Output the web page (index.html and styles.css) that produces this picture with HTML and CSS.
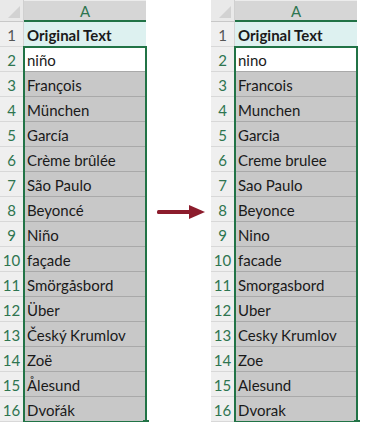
FILE: index.html
```html
<!DOCTYPE html>
<html>
<head>
<meta charset="utf-8">
<link rel="stylesheet" href="styles.css">
</head>
<body>
<div class="page">
  <div class="sheet">
    <div class="corner"><span class="tri"></span></div>
    <div class="colhead">A</div>
    <div class="rh first">1</div><div class="cell title">Original Text</div>
    <div class="rh">2</div><div class="cell active">niño</div>
    <div class="rh">3</div><div class="cell">François</div>
    <div class="rh">4</div><div class="cell">München</div>
    <div class="rh">5</div><div class="cell">García</div>
    <div class="rh">6</div><div class="cell">Crème brûlée</div>
    <div class="rh">7</div><div class="cell">São Paulo</div>
    <div class="rh">8</div><div class="cell">Beyoncé</div>
    <div class="rh">9</div><div class="cell">Niño</div>
    <div class="rh">10</div><div class="cell">façade</div>
    <div class="rh">11</div><div class="cell">Smörgåsbord</div>
    <div class="rh">12</div><div class="cell">Über</div>
    <div class="rh">13</div><div class="cell">Český Krumlov</div>
    <div class="rh">14</div><div class="cell">Zoë</div>
    <div class="rh">15</div><div class="cell">Ålesund</div>
    <div class="rh">16</div><div class="cell">Dvořák</div>
    <div class="selection"><span class="handle"></span></div>
  </div>
  <div class="arrowbox">
    <svg width="50" height="16" viewBox="0 0 50 16">
      <rect x="0" y="6" width="34" height="4" rx="1.5" fill="#8c1c2c"/>
      <path d="M32 1 L48 8 L32 15 Z" fill="#8c1c2c"/>
    </svg>
  </div>
  <div class="sheet">
    <div class="corner"><span class="tri"></span></div>
    <div class="colhead">A</div>
    <div class="rh first">1</div><div class="cell title">Original Text</div>
    <div class="rh">2</div><div class="cell active">nino</div>
    <div class="rh">3</div><div class="cell">Francois</div>
    <div class="rh">4</div><div class="cell">Munchen</div>
    <div class="rh">5</div><div class="cell">Garcia</div>
    <div class="rh">6</div><div class="cell">Creme brulee</div>
    <div class="rh">7</div><div class="cell">Sao Paulo</div>
    <div class="rh">8</div><div class="cell">Beyonce</div>
    <div class="rh">9</div><div class="cell">Nino</div>
    <div class="rh">10</div><div class="cell">facade</div>
    <div class="rh">11</div><div class="cell">Smorgasbord</div>
    <div class="rh">12</div><div class="cell">Uber</div>
    <div class="rh">13</div><div class="cell">Cesky Krumlov</div>
    <div class="rh">14</div><div class="cell">Zoe</div>
    <div class="rh">15</div><div class="cell">Alesund</div>
    <div class="rh">16</div><div class="cell">Dvorak</div>
    <div class="selection"><span class="handle"></span></div>
  </div>
</div>
</body>
</html>
```

FILE: styles.css
```css
html, body {
  margin: 0;
  padding: 0;
  background: #ffffff;
}
.page {
  display: flex;
  align-items: flex-start;
  font-family: Lato, "Open Sans", sans-serif;
  font-size: 15px;
  color: #1a1a1a;
}
.sheet {
  position: relative;
  display: grid;
  grid-template-columns: 24px 122px;
  grid-template-rows: 22px repeat(16, 25px);
  flex: none;
}
.corner {
  position: relative;
  background: #e9e9e9;
  border-right: 1px solid #d0d0d0;
  border-bottom: 1px solid #c8c8c8;
  box-sizing: border-box;
}
.tri {
  position: absolute;
  right: 3px;
  bottom: 3px;
  width: 0;
  height: 0;
  border-left: 12px solid transparent;
  border-bottom: 12px solid #d2d2d2;
}
.colhead {
  background: #d6d6d6;
  color: #2e7550;
  text-align: center;
  line-height: 21px;
  font-size: 15px;
  border-bottom: 2px solid #217346;
  border-top: 1px solid #ececec;
  box-sizing: border-box;
}
.rh {
  grid-column: 1;
  background: #efefef;
  color: #2e7550;
  text-align: center;
  padding-top: 3px;
  line-height: 21px;
  border-bottom: 1px solid #d8d8d8;
  border-right: 1px solid #d4d4d4;
  box-sizing: border-box;
  font-size: 15px;
  white-space: nowrap;
}
.rh.first {
  color: #555555;
}
.cell {
  grid-column: 2;
  background: #c8c8c8;
  border-bottom: 1px solid #a9a9a9;
  box-sizing: border-box;
  padding-left: 3px;
  padding-top: 3px;
  line-height: 21px;
  white-space: nowrap;
  overflow: hidden;
}
.cell.title {
  background: #ddf1f0;
  font-weight: bold;
  border-bottom: 1px solid #c8d8d8;
}
.cell.active {
  background: #ffffff;
}
.selection {
  position: absolute;
  grid-column: 2;
  grid-row: 3 / 18;
  top: -1px;
  left: -1px;
  right: -1px;
  bottom: -1px;
  border: 2px solid #217346;
  pointer-events: none;
}
.handle {
  position: absolute;
  right: -4px;
  bottom: -5px;
  width: 6px;
  height: 6px;
  background: #217346;
}
.arrowbox {
  width: 65px;
  flex: none;
  display: flex;
  justify-content: center;
  padding-top: 204px;
  padding-left: 6px;
  box-sizing: border-box;
}
```
